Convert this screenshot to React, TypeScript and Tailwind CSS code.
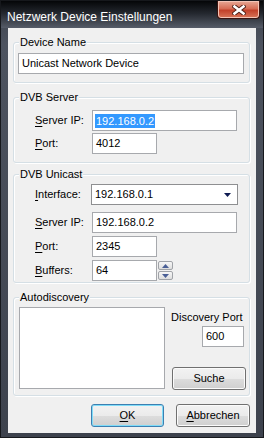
const font = "font-['Liberation_Sans',Arial,sans-serif]";

function Group({
  title,
  className,
  children,
}: {
  title: string;
  className: string;
  children: React.ReactNode;
}) {
  return (
    <div
      className={`relative rounded-[3px] border border-[#d5dfe5] shadow-[inset_1px_1px_0_#ffffff,1px_1px_0_#ffffff] ${className}`}
    >
      <span className="absolute -top-[8px] left-[5px] bg-[#f0f0f0] px-[1px] text-[11px] leading-[14px] text-black">
        {title}
      </span>
      {children}
    </div>
  );
}

function TextBox({
  value,
  className = "",
  selected = false,
}: {
  value: string;
  className?: string;
  selected?: boolean;
}) {
  return (
    <div
      className={`flex h-[21px] items-center border border-[#a7a9ad] bg-white pl-[2px] text-[11px] text-black ${className}`}
    >
      {selected ? (
        <span className="bg-[#3399ff] px-[1px] leading-[14px] text-white">
          {value}
        </span>
      ) : (
        <span className="pl-[1px]">{value}</span>
      )}
    </div>
  );
}

function Label({ k, rest }: { k: string; rest: string }) {
  return (
    <span className="w-[57px] shrink-0 text-[11px] text-black">
      <span className="underline underline-offset-2">{k}</span>
      {rest}
    </span>
  );
}

function Button({
  children,
  className = "",
  isDefault = false,
}: {
  children: React.ReactNode;
  className?: string;
  isDefault?: boolean;
}) {
  return (
    <div
      className={`flex h-[23px] items-center justify-center rounded-[3px] border bg-[linear-gradient(#f2f2f2_0%,#ebebeb_50%,#dddddd_51%,#cfcfcf_100%)] text-[11px] text-black ${
        isDefault
          ? "border-[#3c7fb1] shadow-[inset_0_0_0_1px_#7fdcf8]"
          : "border-[#707070] shadow-[inset_0_0_0_1px_#fbfbfb]"
      } ${className}`}
    >
      {children}
    </div>
  );
}

function SpinButton({ up }: { up: boolean }) {
  return (
    <div className="flex h-[9px] w-[15px] items-center justify-center rounded-[2px] border border-[#a0a3a8] bg-[linear-gradient(#f6f6f6,#dedede)]">
      <svg width="7" height="4" viewBox="0 0 7 4">
        <path d={up ? "M3.5 0 L7 4 L0 4 Z" : "M0 0 L7 0 L3.5 4 Z"} fill="#4a5f96" />
      </svg>
    </div>
  );
}

export default function App() {
  return (
    <div
      className={`flex h-[438px] w-[264px] flex-col border border-[#16181c] bg-[linear-gradient(#3c414c,#4d535f_10%,#3d424d)] ${font}`}
    >
      <div className="flex h-[27px] bg-[linear-gradient(#050608_0%,#23272e_45%,#565c68_100%)]">
        <span className="mt-[8px] flex-1 pl-[6px] text-[12px] leading-[16px] text-white">
          Netzwerk Device Einstellungen
        </span>
        <div className="mr-[3px] flex h-[18px] w-[43px] items-center justify-center rounded-b-[4px] border border-t-0 border-[#3a1410] bg-[linear-gradient(#e8a996_0%,#d66d55_45%,#c2412a_55%,#d9765a_100%)] shadow-[inset_0_0_0_1px_#f3c4b6]">
          <svg width="14" height="10" viewBox="0 0 14 10">
            <path
              d="M2.5 1.5 L11.5 8.5 M11.5 1.5 L2.5 8.5"
              stroke="#4a1c14"
              strokeWidth="4.4"
              strokeLinecap="square"
            />
            <path
              d="M2.5 1.5 L11.5 8.5 M11.5 1.5 L2.5 8.5"
              stroke="#ffffff"
              strokeWidth="2.6"
              strokeLinecap="square"
            />
          </svg>
        </div>
      </div>

      <div className="flex flex-1 px-[7px] pb-[4px]">
        <div className="flex h-[405px] w-[248px] flex-col bg-[#f0f0f0] pl-[5px]">
          <Group title="Device Name" className="mt-[14px] h-[41px] w-[237px] pl-[4px] pt-[10px]">
            <TextBox value="Unicast Network Device" className="w-[226px]" />
          </Group>

          <Group title="DVB Server" className="mt-[14px] h-[66px] w-[237px] pl-[21px] pt-[12px]">
            <div className="flex items-center">
              <Label k="S" rest="erver IP:" />
              <TextBox value="192.168.0.2" className="w-[145px]" selected />
            </div>
            <div className="mt-[2px] flex items-center">
              <Label k="P" rest="ort:" />
              <TextBox value="4012" className="w-[65px]" />
            </div>
          </Group>

          <Group title="DVB Unicast" className="mt-[11px] h-[109px] w-[237px] pl-[21px] pt-[9px]">
            <div className="flex items-center">
              <Label k="I" rest="nterface:" />
              <div className="-ml-[1px] flex h-[21px] w-[147px] items-center justify-between border border-[#8e8f91] bg-white pl-[3px] pr-[6px] text-[11px] text-black">
                <span>192.168.0.1</span>
                <svg width="7" height="4" viewBox="0 0 7 4">
                  <path d="M0 0 L7 0 L3.5 4 Z" fill="#0f1b52" />
                </svg>
              </div>
            </div>
            <div className="mt-[7px] flex items-center">
              <Label k="S" rest="erver IP:" />
              <TextBox value="192.168.0.2" className="w-[145px]" />
            </div>
            <div className="mt-[3px] flex items-center">
              <Label k="P" rest="ort:" />
              <TextBox value="2345" className="w-[65px]" />
            </div>
            <div className="mt-[3px] flex items-center">
              <Label k="B" rest="uffers:" />
              <TextBox value="64" className="w-[65px]" />
              <div className="ml-[1px] flex flex-col gap-[1px]">
                <SpinButton up />
                <SpinButton up={false} />
              </div>
            </div>
          </Group>

          <Group title="Autodiscovery" className="mt-[14px] flex h-[99px] w-[237px] pl-[5px] pt-[9px]">
            <div className="h-[82px] w-[146px] border border-[#a7a9ad] bg-white" />
            <div className="ml-[6px] flex flex-col">
              <span className="mt-[3px] text-[11px] leading-[14px] text-black">
                Discovery Port
              </span>
              <TextBox value="600" className="ml-[31px] mt-[2px] w-[42px]" />
              <Button className="ml-[1px] mt-[20px] w-[74px]">Suche</Button>
            </div>
          </Group>

          <div className="mt-[8px] flex justify-end gap-[12px] pr-[6px]">
            <Button className="w-[73px]" isDefault>
              <span className="underline underline-offset-2">O</span>K
            </Button>
            <Button className="w-[74px]">
              <span className="underline underline-offset-2">A</span>bbrechen
            </Button>
          </div>
        </div>
      </div>
    </div>
  );
}
